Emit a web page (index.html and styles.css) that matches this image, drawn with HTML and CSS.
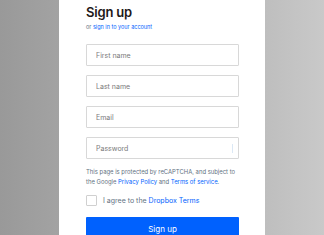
FILE: index.html
```html
<!DOCTYPE html>
<html lang="en">
<head>
    <meta charset="UTF-8">
    <meta name="viewport" content="width=device-width, initial-scale=1.0">
    <title>Sign up</title>
    <link rel="stylesheet" href="styles.css">
</head>
<body>
    <div class="card">
        <h1>Sign up</h1>
        <p class="sub">or <a href="#">sign in to your account</a></p>

        <div class="field"><input type="text" placeholder="First name"></div>
        <div class="field"><input type="text" placeholder="Last name"></div>
        <div class="field"><input type="email" placeholder="Email"></div>
        <div class="field pw">
            <input type="password" placeholder="Password">
            <span class="pw-mark"></span>
        </div>

        <p class="terms">This page is protected by reCAPTCHA, and subject to<br>the Google <a href="#">Privacy Policy</a> and <a href="#">Terms of service</a>.</p>

        <label class="agree">
            <span class="box"></span>
            <span>I agree to the <a href="#">Dropbox Terms</a></span>
        </label>

        <button class="submit-btn">Sign up</button>
    </div>
</body>
</html>
```

FILE: styles.css
```css
html, body {
    height: 100%;
}
body {
    margin: 0;
    font-family: 'Inter', 'Liberation Sans', sans-serif;
    background: linear-gradient(to right, #999999, #a9a9a9 30%, #bdbdbd 80%, #c9c9c9);
    overflow: hidden;
}
a {
    color: #0061fe;
    text-decoration: none;
}
.card {
    margin-left: 59px;
    width: 206px;
    height: 100%;
    box-sizing: border-box;
    padding: 4px 26px 0 27px;
    background: white;
}
h1 {
    margin: 0;
    font-size: 13px;
    line-height: 16px;
    font-weight: 600;
    letter-spacing: -0.2px;
    color: #1e1919;
}
.sub {
    margin: 3px 0 13px;
    font-size: 5.5px;
    line-height: 8px;
    color: #637282;
}
.field {
    position: relative;
    margin-bottom: 9px;
}
.field input {
    display: block;
    width: 100%;
    height: 22px;
    box-sizing: border-box;
    padding: 0 9px;
    border: 1px solid #d8d8d8;
    border-radius: 1px;
    font-family: inherit;
    font-size: 7px;
    color: #1e1919;
    background: white;
    outline: none;
}
.field input::placeholder {
    color: #7a7a7a;
}
.pw-mark {
    position: absolute;
    right: 6px;
    top: 7px;
    width: 1px;
    height: 9px;
    background: #dbe8f5;
}
.field.pw {
    margin-bottom: 8px;
}
.terms {
    margin: 0;
    font-size: 5.9px;
    line-height: 9.5px;
    color: #637282;
    white-space: nowrap;
}
.agree {
    display: flex;
    align-items: center;
    gap: 6px;
    margin-top: 9px;
    height: 10px;
    font-size: 7px;
    color: #637282;
}
.box {
    width: 9px;
    height: 9px;
    border: 1px solid #d0d0d0;
    border-radius: 1px;
    flex-shrink: 0;
}
.submit-btn {
    display: block;
    width: 100%;
    height: 24px;
    margin-top: 12px;
    font-family: inherit;
    font-size: 8px;
    color: white;
    background-color: #0061fe;
    border: none;
    border-radius: 1px;
    cursor: pointer;
}
```
